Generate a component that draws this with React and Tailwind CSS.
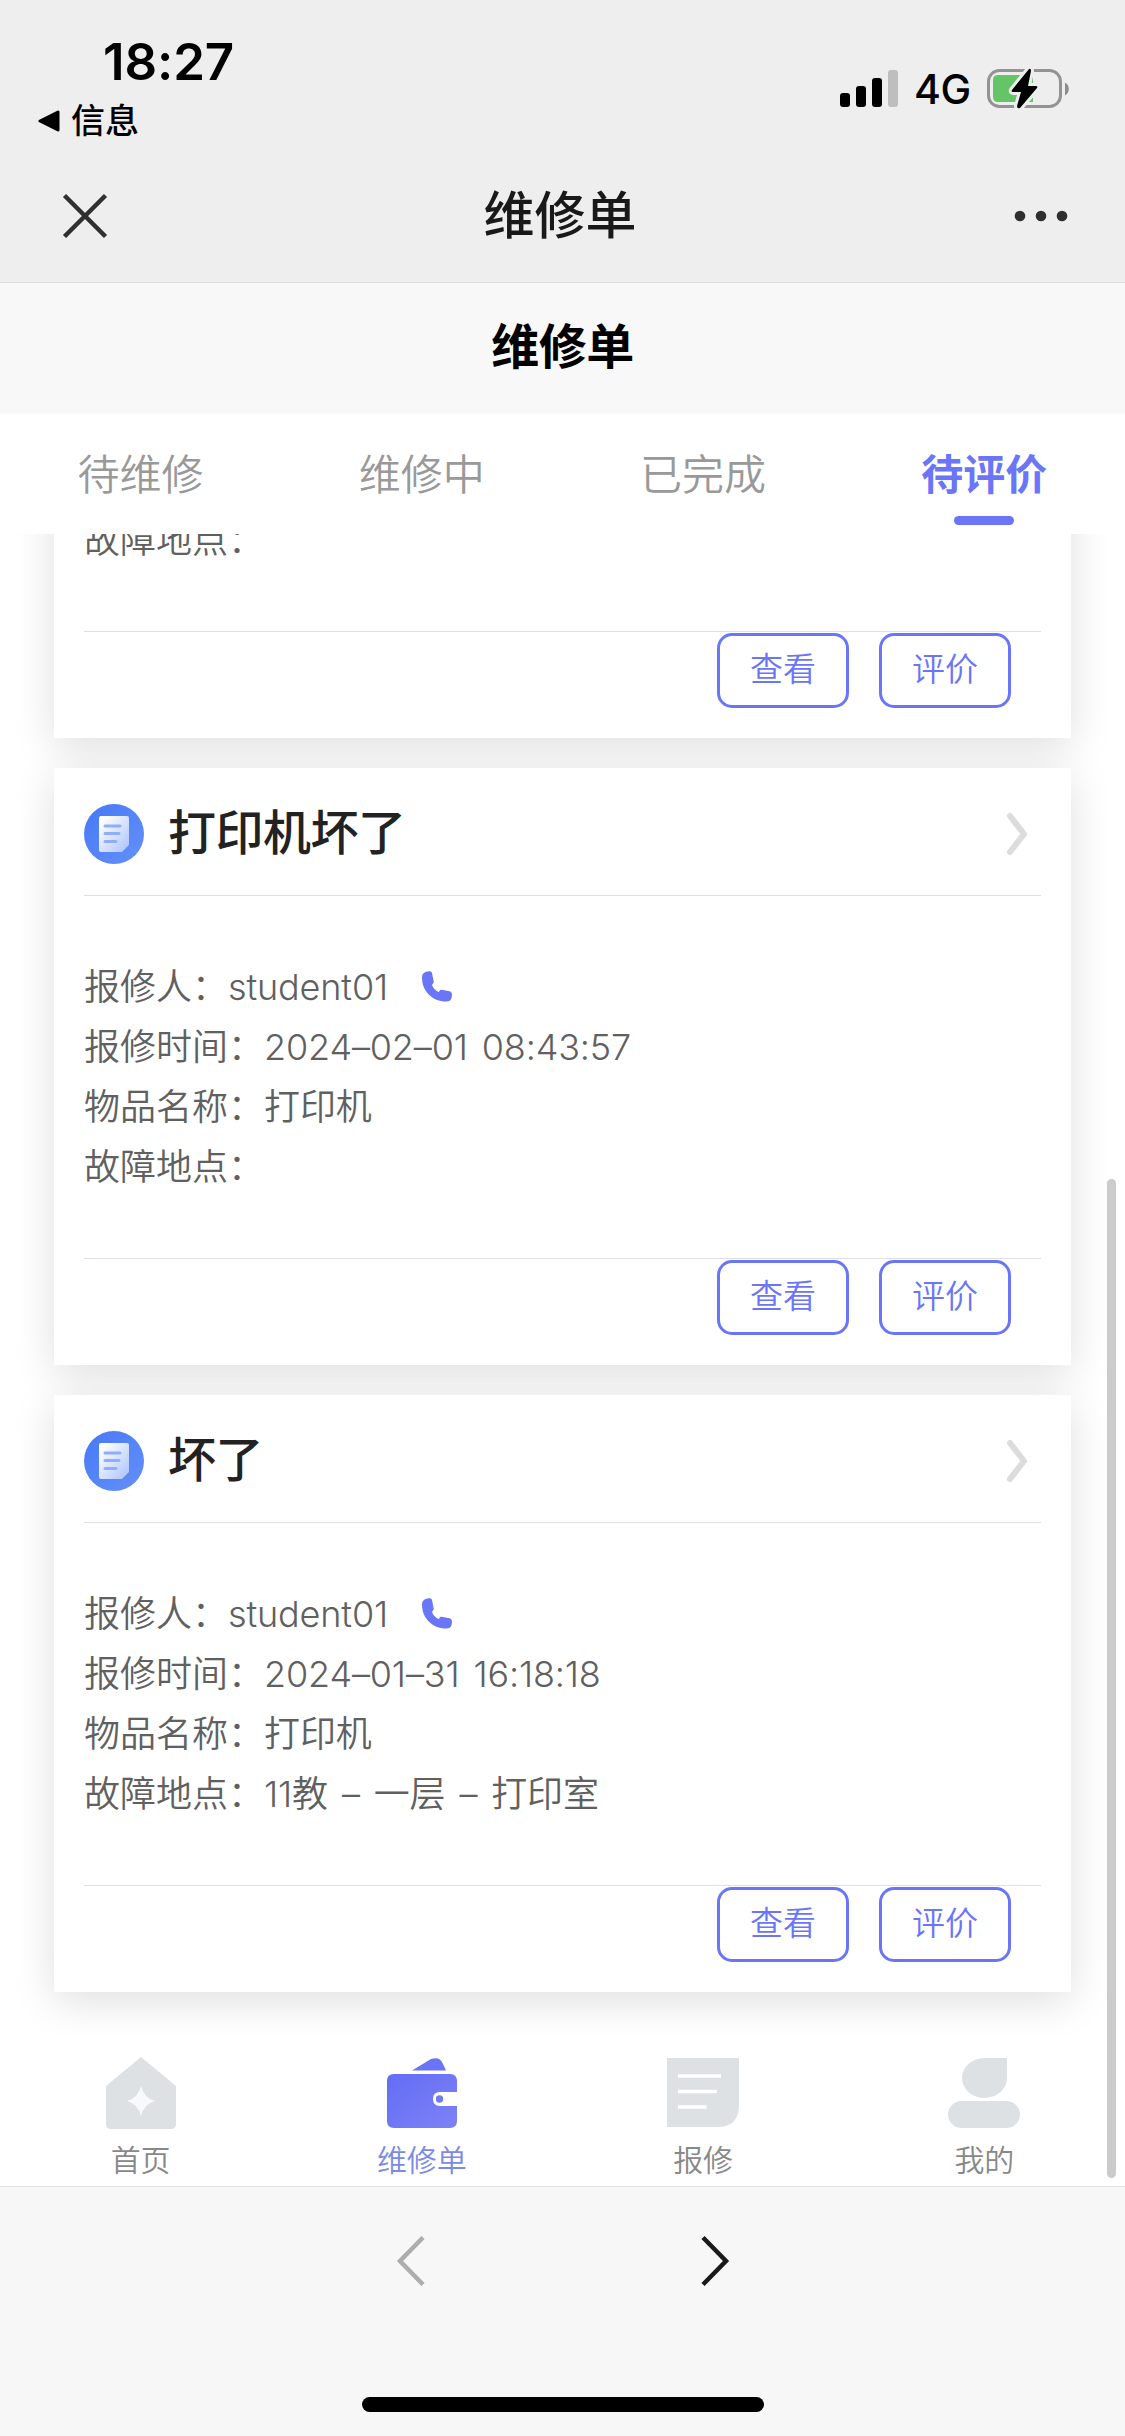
import React, { useState } from "react";

const orders = [
  { id: 1, rows: [{ label: "故障地点", value: "" }] },
  {
    id: 2,
    title: "打印机坏了",
    rows: [
      { label: "报修人", value: "student01", phone: true },
      { label: "报修时间", value: "2024–02–01 08:43:57" },
      { label: "物品名称", value: "打印机" },
      { label: "故障地点", value: "" },
    ],
  },
  {
    id: 3,
    title: "坏了",
    rows: [
      { label: "报修人", value: "student01", phone: true },
      { label: "报修时间", value: "2024–01–31 16:18:18" },
      { label: "物品名称", value: "打印机" },
      { label: "故障地点", value: "11教 – 一层 – 打印室" },
    ],
  },
];

const tabs = ["待维修", "维修中", "已完成", "待评价"];

const StatusBar = () => (
  <div className="flex h-[150px] justify-between pl-[38px] pr-[56px]">
    <div className="pt-[31px]">
      <div className="pl-[65px] text-[51px] leading-[62px] font-semibold tracking-[-0.1px] text-black">18:27</div>
      <div className="mt-[4px] flex items-center gap-[11px]">
        <svg width="22" height="22" viewBox="0 0 22 22">
          <path d="M2 11 L20 2 V20 Z" stroke="#000" strokeWidth="3" strokeLinejoin="round" />
        </svg>
        <span className="text-[34px] leading-[48px] font-medium text-black">信息</span>
      </div>
    </div>
    <div className="flex h-[41px] items-center mt-[68px]">
      <svg width="58" height="41" viewBox="0 0 58 41">
        <rect x="0" y="25" width="10" height="14" rx="3" />
        <rect x="16" y="18" width="10" height="21" rx="3" />
        <rect x="32" y="10" width="10" height="29" rx="3" />
        <rect x="48" y="2" width="10" height="37" rx="3" fill="#bebebe" />
      </svg>
      <span className="ml-[16px] w-[73px] text-[41px] leading-[41px] tracking-[-0.5px] font-medium text-black pt-[2px]">4G</span>
      <svg width="82" height="41" viewBox="0 0 82 41">
        <rect x="1.5" y="2.5" width="72" height="36" rx="11" fill="none" stroke="#939393" strokeWidth="3" />
        <path d="M78 14.5 C83 17 83 25 78 27.5 Z" fill="#8c8c8c" />
        <path d="M11 7 H46 V34 H11 Q6 34 6 29 V12 Q6 7 11 7 Z" fill="#65c466" />
        <path
          d="M42 1 L25 22 Q24 24 26 24 H34 L30 38 Q30 41 33 40 L50 20 Q51 18 49 18 H41 L44 3 Q44 0 42 1 Z"
          stroke="#eee"
          strokeWidth="6"
          paintOrder="stroke"
        />
      </svg>
    </div>
  </div>
);

const OrderIcon = () => (
  <svg width="60" height="60" viewBox="0 0 60 60">
    <defs>
      <linearGradient id="disc" x1="0" y1="0" x2="1" y2="1">
        <stop offset="0" stopColor="#4679f5" />
        <stop offset="1" stopColor="#6490fa" />
      </linearGradient>
      <linearGradient id="paper" x1="0" y1="0" x2="1" y2="1">
        <stop offset="0.1" stopColor="#fff" />
        <stop offset="1" stopColor="#a9c1fb" />
      </linearGradient>
    </defs>
    <circle cx="30" cy="30" r="30" fill="url(#disc)" />
    <path d="M17 12 H43 Q45 12 45 14 V41 L38 48 H17 Q15 48 15 46 V14 Q15 12 17 12 Z" fill="url(#paper)" />
    <path d="M21 22 H36 M21 29.500 H35 M21 37.500 H32" stroke="#8fadf9" strokeWidth="3" strokeLinecap="round" />
  </svg>
);

const PhoneIcon = () => (
  <svg width="30" height="31" viewBox="0 0 30 31" fill="#6a75f8">
    <path d="M3.500 1 C6 0 9.500 -0.500 10 2 L11.700 10.500 C12 12.500 10 13 10 14 C11 17 13.500 19.500 16.500 21 C17.500 21 17.500 18.500 19.500 18.800 L27.500 20.300 C30.500 21 30.200 24 29.500 27 C29 29.500 27 30.500 24.500 30.500 C10 30.500 0 20 0 6.500 C0 4 1 2 3.500 1 Z" />
  </svg>
);

const OrderCard = ({ order }) => (
  <div className="shrink-0 bg-white px-[30px] pb-[30px] shadow-[0_9px_40px_rgba(0,0,0,0.13)]">
    {order.title && (
      <div className="flex h-[128px] items-center border-b border-[#dfdfea] pt-[5px] pr-[13px]">
        <OrderIcon />
        <h2 className="ml-[24px] flex-1 -mt-[2px] text-[48px] leading-[60px] font-medium tracking-[-0.5px] text-[#222]">{order.title}</h2>
        <svg width="22" height="44" viewBox="0 0 22 44" fill="none" stroke="#dcdcdc" strokeWidth="6" strokeLinecap="round" strokeLinejoin="round">
          <path d="M4 4 L18 22 L4 40" />
        </svg>
      </div>
    )}
    <div className="pt-[60px] pb-[62px]">
      {order.rows.map(row => (
        <div key={row.label} className="flex h-[60px] items-center pt-[2px] text-[36px] font-[350] text-[#606060]">
          <span>{row.label}：</span>
          <span className="tracking-[-0.15px] [word-spacing:4px]">{row.value}</span>
          {row.phone && <span className="ml-[34px] -mt-[2px]"><PhoneIcon /></span>}
        </div>
      ))}
    </div>
    <div className="flex justify-end gap-[30px] border-t border-[#dfdfea] pt-px pr-[30px]">
      {["查看", "评价"].map(name => (
        <button
          key={name}
          className="flex h-[75px] w-[132px] items-center justify-center rounded-[15px] border-3 border-[#6a75f8] pb-px text-[33px] font-[350] text-[#6a75f8]"
        >
          {name}
        </button>
      ))}
    </div>
  </div>
);

const HomeIcon = () => (
  <svg width="72" height="72" viewBox="0 0 72 72">
    <path d="M36 0 L71 29 V67 Q71 72 66 72 H6 Q1 72 1 67 V29 Z" fill="#dde1e4" />
    <path d="M36 29 Q39 41 50 44 Q39 47 36 59 Q33 47 22 44 Q33 41 36 29 Z" fill="#f8f9fa" />
  </svg>
);

const WalletIcon = () => (
  <svg width="72" height="72" viewBox="0 0 72 72">
    <defs>
      <linearGradient id="wallet" x1="0" y1="0" x2="1" y2="1">
        <stop offset="0" stopColor="#636df6" />
        <stop offset="1" stopColor="#7e82f5" />
      </linearGradient>
    </defs>
    <path d="M26 13.500 L45 2 Q54 -1 57 7 L60 13.500 Z" fill="#6b74f6" />
    <path d="M8 17 H64 Q71 17 71 24 V35 H54 Q47 35 47 42 Q47 49 54 49 H71 V64 Q71 71 64 71 H8 Q1 71 1 64 V24 Q1 17 8 17 Z" fill="url(#wallet)" />
    <circle cx="53.500" cy="42" r="3.700" fill="#7079f6" />
  </svg>
);

const ReportIcon = () => (
  <svg width="72" height="72" viewBox="0 0 72 72">
    <path d="M0 1 H72 V48 Q72 70 50 70 H0 Z" fill="#dde1e4" />
    <path d="M11 19 H54 M11 34.500 H50 M11 50 H39.500" stroke="#fff" strokeWidth="3.500" />
  </svg>
);

const MineIcon = () => (
  <svg width="72" height="72" viewBox="0 0 72 72" fill="#dde1e4">
    <path d="M36 1 H59 V20 A22.500 20 0 1 1 36 1 Z" />
    <rect x="0" y="44" width="72" height="27" rx="13.500" />
  </svg>
);

const navItems = [
  { name: "首页", Icon: HomeIcon },
  { name: "维修单", Icon: WalletIcon },
  { name: "报修", Icon: ReportIcon },
  { name: "我的", Icon: MineIcon },
];

const App = () => {
  const [activeTab, setActiveTab] = useState("待评价");
  const [activeNav, setActiveNav] = useState("维修单");

  return (
    <div className="relative flex h-[2436px] w-[1125px] flex-col overflow-hidden bg-white font-['Inter','Noto_Sans_CJK_SC',sans-serif]">
      <header className="h-[283px] border-b border-[#dcdcdc] bg-[#eee]">
        <StatusBar />
        <div className="flex h-[132px] items-center justify-between pl-[62px] pr-[57px]">
          <svg width="46" height="46" viewBox="0 0 46 46" stroke="#2f2f2f" strokeWidth="4.500">
            <path d="M2.500 2.500 L43.500 43.500 M43.500 2.500 L2.500 43.500" />
          </svg>
          <h1 className="mr-[2px] pt-px text-[51px] font-medium text-[#191919]">维修单</h1>
          <svg width="54" height="12" viewBox="0 0 54 12" fill="#2f2f2f">
            <circle cx="6" cy="6" r="5.300" />
            <circle cx="27" cy="6" r="5.300" />
            <circle cx="48" cy="6" r="5.300" />
          </svg>
        </div>
      </header>

      <div className="flex h-[131px] items-center justify-center bg-[#f8f8f8] pb-[4px] text-[48px] font-bold tracking-[-0.5px] text-black">
        维修单
      </div>

      <div className="grid h-[120px] grid-cols-4 bg-white">
        {tabs.map(tab => (
          <button key={tab} onClick={() => setActiveTab(tab)} className="flex flex-col items-center pt-[30px] text-[42px] leading-[62px]">
            <span className={tab === activeTab ? "font-bold text-[#6a75f8]" : "font-[350] text-[#999]"}>{tab}</span>
            {tab === activeTab && <span className="mt-[10px] h-[9px] w-[60px] rounded-full bg-[#6a75f8]" />}
          </button>
        ))}
      </div>

      <main className="flex h-[1502px] flex-col justify-end gap-[30px] overflow-hidden px-[54px] pb-[44px]">
        {orders.map(order => (
          <OrderCard key={order.id} order={order} />
        ))}
      </main>

      <nav className="grid h-[150px] grid-cols-4 bg-white">
        {navItems.map(({ name, Icon }) => (
          <button key={name} onClick={() => setActiveNav(name)} className="flex flex-col items-center pt-[21px] font-[350]">
            <Icon />
            <span className={name === activeNav ? "mt-[9px] text-[30px] leading-[44px] text-[#7b8ae4]" : "mt-[9px] text-[30px] leading-[44px] text-[#888]"}>
              {name}
            </span>
          </button>
        ))}
      </nav>

      <footer className="flex flex-1 flex-col items-center justify-between border-t border-[#e2e2e2] bg-[#f7f7f7] pt-[48px] pb-[24px]">
        <div className="flex gap-[274px]">
          <svg width="30" height="52" viewBox="0 0 30 52" fill="none" stroke="#adadad" strokeWidth="4.500">
            <path d="M27 2.500 L4 26 L27 49.500" />
          </svg>
          <svg width="30" height="52" viewBox="0 0 30 52" fill="none" stroke="#1a1a1a" strokeWidth="4.500">
            <path d="M3 2.500 L26 26 L3 49.500" />
          </svg>
        </div>
        <div className="h-[15px] w-[402px] rounded-full bg-black" />
      </footer>

      {/* scrollbar thumb */}
      <div className="absolute top-[1179px] right-[9px] h-[999px] w-[9px] rounded-full bg-[#cbcbcb]" />
    </div>
  );
};

export default App;
